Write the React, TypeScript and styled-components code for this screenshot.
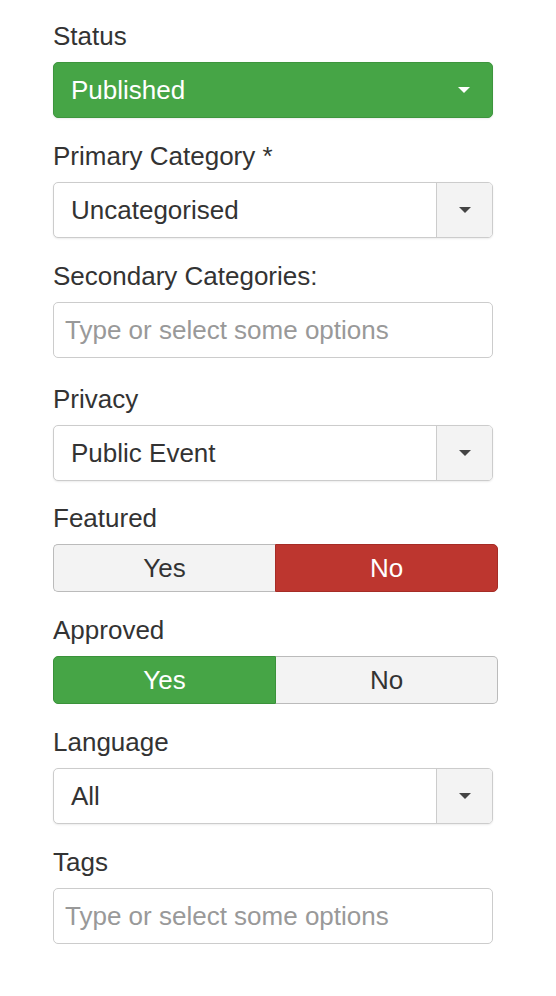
import styled, { createGlobalStyle } from "styled-components";

const GlobalStyle = createGlobalStyle`
  html, body {
    margin: 0;
    padding: 0;
    background: #ffffff;
  }
  * {
    box-sizing: border-box;
  }
`

const Page = styled.div`
  width: 556px;
  min-height: 996px;
  padding: 21px 0 0 53px;
  font-family: "Liberation Sans", Arial, Helvetica, sans-serif;
  color: #333333;
`

const Field = styled.div<{ $gap?: number }>`
  margin-bottom: ${p => p.$gap ?? 23}px;
`

const Label = styled.div`
  font-size: 26px;
  line-height: 30px;
  height: 30px;
  margin-bottom: 11px;
  color: #333333;
`

const SelectBox = styled.div<{ $tone?: "success" }>`
  width: 440px;
  height: 56px;
  display: flex;
  align-items: stretch;
  border: 1px solid ${p => (p.$tone === "success" ? "#3d953d" : "#cccccc")};
  border-radius: 5px;
  background: ${p => (p.$tone === "success" ? "#46a546" : "#ffffff")};
  color: ${p => (p.$tone === "success" ? "#ffffff" : "#333333")};
  box-shadow: 0 1px 2px rgba(0, 0, 0, 0.08);
  overflow: hidden;
`

const SelectValue = styled.div`
  flex: 1;
  display: flex;
  align-items: center;
  padding-left: 17px;
  font-size: 26px;
`

const DropButton = styled.div<{ $plain?: boolean }>`
  width: 56px;
  display: flex;
  align-items: center;
  justify-content: center;
  background: ${p => (p.$plain ? "transparent" : "#f3f3f3")};
  border-left: ${p => (p.$plain ? "none" : "1px solid #cccccc")};
`

const Caret = styled.span<{ $light?: boolean }>`
  width: 0;
  height: 0;
  border-left: 6px solid transparent;
  border-right: 6px solid transparent;
  border-top: 6px solid ${p => (p.$light ? "#ffffff" : "#444444")};
`

const TextBox = styled.div`
  width: 440px;
  height: 56px;
  display: flex;
  align-items: center;
  padding-left: 11px;
  border: 1px solid #cccccc;
  border-radius: 5px;
  font-size: 26px;
  color: #999999;
`

const Toggle = styled.div`
  width: 445px;
  height: 48px;
  display: flex;
`

const ToggleButton = styled.div<{ $active?: "green" | "red"; $side: "left" | "right" }>`
  flex: 1;
  display: flex;
  align-items: center;
  justify-content: center;
  font-size: 26px;
  color: ${p => (p.$active ? "#ffffff" : "#333333")};
  background: ${p =>
    p.$active === "green" ? "#46a546" : p.$active === "red" ? "#bd362f" : "#f3f3f3"};
  border: 1px solid
    ${p => (p.$active === "green" ? "#3a923a" : p.$active === "red" ? "#a52c26" : "#bbbbbb")};
  border-radius: ${p => (p.$side === "left" ? "5px 0 0 5px" : "0 5px 5px 0")};
  ${p => (p.$side === "right" && !p.$active ? "border-left: none;" : "")}
  ${p => (p.$side === "left" && !p.$active ? "border-right: none;" : "")}
`

const Select = ({ value, success }: { value: string; success?: boolean }) => (
  <SelectBox $tone={success ? "success" : undefined}>
    <SelectValue>{value}</SelectValue>
    <DropButton $plain={success}>
      <Caret $light={success} />
    </DropButton>
  </SelectBox>
)

const App = () => {
  return (
    <>
      <GlobalStyle />
      <Page>
        <Field>
          <Label>Status</Label>
          <Select value="Published" success />
        </Field>
        <Field>
          <Label>Primary Category *</Label>
          <Select value="Uncategorised" />
        </Field>
        <Field $gap={26}>
          <Label>Secondary Categories:</Label>
          <TextBox>Type or select some options</TextBox>
        </Field>
        <Field $gap={22}>
          <Label>Privacy</Label>
          <Select value="Public Event" />
        </Field>
        <Field>
          <Label>Featured</Label>
          <Toggle>
            <ToggleButton $side="left">Yes</ToggleButton>
            <ToggleButton $side="right" $active="red">No</ToggleButton>
          </Toggle>
        </Field>
        <Field>
          <Label>Approved</Label>
          <Toggle>
            <ToggleButton $side="left" $active="green">Yes</ToggleButton>
            <ToggleButton $side="right">No</ToggleButton>
          </Toggle>
        </Field>
        <Field>
          <Label>Language</Label>
          <Select value="All" />
        </Field>
        <Field>
          <Label>Tags</Label>
          <TextBox>Type or select some options</TextBox>
        </Field>
      </Page>
    </>
  )
}

export default App
